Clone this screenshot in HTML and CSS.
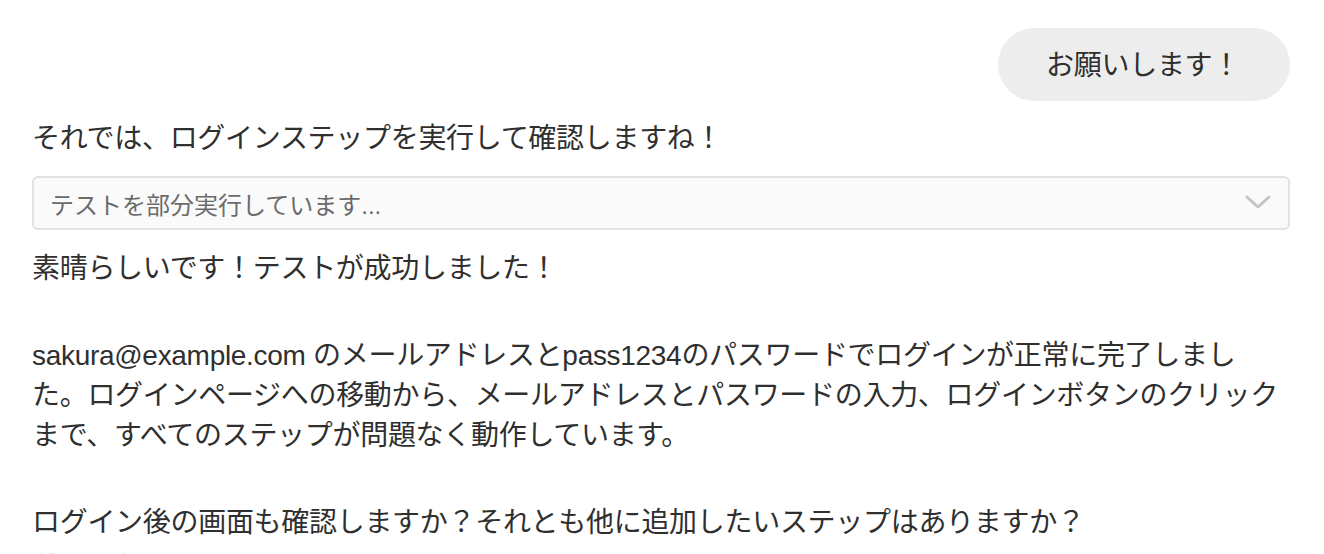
FILE: index.html
```html
<!DOCTYPE html>
<html>
    <head>
        <meta charset="utf-8">
        <title>チャット</title>
        <link rel="stylesheet" href="styles.css">
    </head>
    <body>
        <div class="chat">
            <div class="user_row">
                <div class="user_bubble">お願いします！</div>
            </div>

            <p class="msg msg_first">それでは、ログインステップを実行して確認しますね！</p>

            <div class="tool_box">
                <span class="tool_label">テストを部分実行しています...</span>
                <svg class="tool_chevron" width="26" height="16" viewBox="0 0 26 16">
                    <path d="M2 2 L13 12 L24 2" fill="none" stroke="#c4c4c4" stroke-width="3" stroke-linecap="round" stroke-linejoin="round"/>
                </svg>
            </div>

            <p class="msg msg_after_tool">素晴らしいです！テストが成功しました！</p>

            <p class="msg">sakura@example.com のメールアドレスとpass1234のパスワードでログインが正常に完了しました。ログインページへの移動から、メールアドレスとパスワードの入力、ログインボタンのクリックまで、すべてのステップが問題なく動作しています。</p>

            <p class="msg">ログイン後の画面も確認しますか？それとも他に追加したいステップはありますか？</p>

            <p class="status">結果を確認しています...</p>
        </div>
    </body>
</html>
```

FILE: styles.css
```css
* {
    box-sizing: border-box;
}

body {
    margin: 0;
    background-color: #ffffff;
    font-family: "Liberation Sans", "Noto Sans CJK JP", sans-serif;
    color: #2f2f2f;
    overflow: hidden;
}

.chat {
    width: 1258px;
    margin-left: 32px;
    padding-top: 28px;
}

.user_row {
    display: flex;
    justify-content: flex-end;
}

.user_bubble {
    background-color: #ededed;
    border-radius: 37px;
    padding: 18px 50px 15px 48px;
    font-size: 28px;
    line-height: 40px;
    letter-spacing: -0.3px;
}

.msg {
    margin: 47px 0 0 0;
    font-size: 28px;
    line-height: 40px;
    letter-spacing: -0.3px;
}

.msg_first {
    margin-top: 18px;
}

.msg_after_tool {
    margin-top: 19px;
}

.tool_box {
    margin-top: 17px;
    height: 54px;
    border: 2px solid #e2e2e2;
    border-radius: 6px;
    background-color: #fafafa;
    display: flex;
    align-items: center;
    justify-content: space-between;
    padding: 0 17px 0 16px;
}

.tool_label {
    font-size: 24px;
    color: #6b6b6b;
}

.tool_chevron {
    display: block;
}

.status {
    margin: 3px 0 0 4px;
    font-size: 24px;
    line-height: 40px;
    color: #a8a8a8;
}
```
